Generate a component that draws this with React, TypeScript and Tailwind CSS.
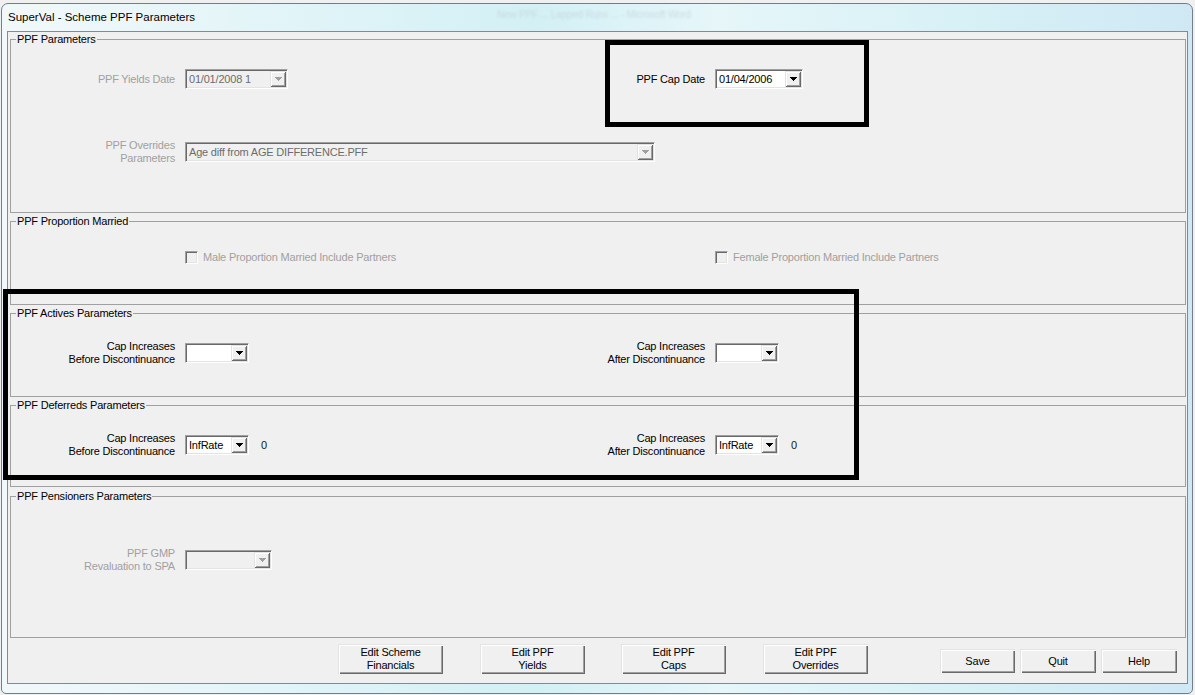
import React from "react";

const ui = "font-['Liberation_Sans',Arial,sans-serif] text-[11px] tracking-[-0.2px]";

function Arrow({ disabled }: { disabled?: boolean }) {
  return (
    <svg width="7" height="4" viewBox="0 0 7 4" shapeRendering="crispEdges">
      <path d="M0 0h7v1h-1v1h-1v1h-1v1h-1v-1h-1v-1h-1v-1h-1z" fill={disabled ? "#a0a0a0" : "#000"} />
    </svg>
  );
}

function Combo({ className, value, disabled }: { className: string; value?: string; disabled?: boolean }) {
  return (
    <div
      className={`flex h-[20px] shrink-0 border border-t-[#a0a0a0] border-l-[#a0a0a0] border-b-white border-r-white p-[1px] shadow-[inset_1px_1px_0_#696969,inset_-1px_-1px_0_#e3e3e3] ${
        disabled ? "bg-[#f0f0f0]" : "bg-white"
      } ${className}`}
    >
      <span
        className={`flex-1 overflow-hidden whitespace-nowrap pl-[2px] leading-[16px] ${
          disabled ? "text-[#6d6d6d]" : "text-black"
        }`}
      >
        {value}
      </span>
      <span className="flex w-[16px] items-center justify-center bg-[#f0f0f0] shadow-[inset_1px_1px_0_#e3e3e3,inset_-1px_-1px_0_#696969,inset_2px_2px_0_#fff,inset_-2px_-2px_0_#a0a0a0]">
        <Arrow disabled={disabled} />
      </span>
    </div>
  );
}

function Check({ label }: { label: string }) {
  return (
    <div className="flex items-center">
      <span className="h-[13px] w-[13px] border border-t-[#a0a0a0] border-l-[#a0a0a0] border-b-white border-r-white bg-[#f0f0f0] shadow-[inset_1px_1px_0_#696969,inset_-1px_-1px_0_#e3e3e3]" />
      <span className="ml-[5px] leading-[13px] text-[#a0a0a0]">{label}</span>
    </div>
  );
}

function Label({ lines, disabled }: { lines: string[]; disabled?: boolean }) {
  return (
    <div className={`w-[164px] shrink-0 text-right leading-[13px] ${disabled ? "text-[#a0a0a0]" : "text-black"}`}>
      {lines.map((l) => (
        <div key={l}>{l}</div>
      ))}
    </div>
  );
}

function Field({
  lines,
  disabled,
  children,
}: {
  lines: string[];
  disabled?: boolean;
  children: React.ReactNode;
}) {
  return (
    <div className="flex items-center">
      <Label lines={lines} disabled={disabled} />
      <div className="ml-[10px] flex items-center">{children}</div>
    </div>
  );
}

function Group({ title, className, children }: { title: string; className: string; children: React.ReactNode }) {
  return (
    <fieldset className={`border border-[#a0a0a0] ${className}`}>
      <legend className="ml-[5px] px-[1px] leading-[13px] text-black">{title}</legend>
      {children}
    </fieldset>
  );
}

function Btn({ className, lines }: { className: string; lines: string[] }) {
  return (
    <div
      className={`flex shrink-0 flex-col items-center justify-center bg-[#f0f0f0] leading-[13px] text-black shadow-[inset_1px_1px_0_#e3e3e3,inset_2px_2px_0_#fff,inset_-1px_-1px_0_#696969,inset_-2px_-2px_0_#a0a0a0] ${className}`}
    >
      {lines.map((l) => (
        <div key={l}>{l}</div>
      ))}
    </div>
  );
}

export default function App() {
  return (
    <div className={`relative h-[695px] w-[1195px] overflow-hidden bg-[#f0f0f0] pb-[1px] pl-[1px] pr-[2px] pt-[3px] ${ui}`}>
      <div className="flex h-full flex-col rounded-t-[7px] rounded-b-[5px] border border-[#6f7f8b] bg-[linear-gradient(90deg,#f2f8fa,#e4f5f8_20%,#d3f0f5_45%,#e6f6f9_60%,#d8f1f6_80%,#cfe8f4)]">
        <div className="relative flex h-[27px] items-center pl-[6px]">
          <span className="font-['Liberation_Sans',Arial,sans-serif] text-[11.5px] tracking-normal text-black">
            SuperVal - Scheme PPF Parameters
          </span>
          <span className="absolute left-[495px] top-[3px] text-[10px] text-[#bccdd3] opacity-60 blur-[0.8px]">
            New PPF ... Lapped Runs ... - Microsoft Word
          </span>
        </div>
        <div className="ml-[5px] mr-[4px] flex h-[653px] flex-col border border-[#7f8c95] bg-[#f0f0f0] pl-[2px] pr-[1px] pt-[1px]">
          <Group title="PPF Parameters" className="h-[180px]">
            <div className="mt-[23px] grid grid-cols-[530px_1fr]">
              <Field lines={["PPF Yields Date"]} disabled>
                <Combo className="w-[103px]" value="01/01/2008 1" disabled />
              </Field>
              <Field lines={["PPF Cap Date"]}>
                <Combo className="w-[88px]" value="01/04/2006" />
              </Field>
            </div>
            <div className="mt-[50px]">
              <Field lines={["PPF Overrides", "Parameters"]} disabled>
                <Combo className="w-[470px]" value="Age diff from AGE DIFFERENCE.PFF" disabled />
              </Field>
            </div>
          </Group>

          <Group title="PPF Proportion Married" className="mt-[2px] h-[90px]">
            <div className="mt-[23px] grid grid-cols-[530px_1fr]">
              <div className="pl-[174px]">
                <Check label="Male Proportion Married Include Partners" />
              </div>
              <div className="pl-[174px]">
                <Check label="Female Proportion Married Include Partners" />
              </div>
            </div>
          </Group>

          <Group title="PPF Actives Parameters" className="mt-[2px] h-[90px]">
            <div className="mt-[20px] grid grid-cols-[530px_1fr]">
              <Field lines={["Cap Increases", "Before Discontinuance"]}>
                <Combo className="w-[64px]" />
              </Field>
              <Field lines={["Cap Increases", "After Discontinuance"]}>
                <Combo className="w-[64px]" />
              </Field>
            </div>
          </Group>

          <Group title="PPF Deferreds Parameters" className="mt-[2px] h-[88px]">
            <div className="mt-[20px] grid grid-cols-[530px_1fr]">
              <Field lines={["Cap Increases", "Before Discontinuance"]}>
                <Combo className="w-[64px]" value="InfRate" />
                <span className="ml-[12px] text-[#1a1a00]">0</span>
              </Field>
              <Field lines={["Cap Increases", "After Discontinuance"]}>
                <Combo className="w-[64px]" value="InfRate" />
                <span className="ml-[12px] text-[#1a1a00]">0</span>
              </Field>
            </div>
          </Group>

          <Group title="PPF Pensioners Parameters" className="mt-[3px] h-[148px]">
            <div className="mt-[44px]">
              <Field lines={["PPF GMP", "Revaluation to SPA"]} disabled>
                <Combo className="w-[87px]" disabled />
              </Field>
            </div>
          </Group>

          <div className="mt-[6px] flex items-start pl-[328px]">
            <Btn className="h-[30px] w-[105px]" lines={["Edit Scheme", "Financials"]} />
            <Btn className="ml-[37px] h-[30px] w-[105px]" lines={["Edit PPF", "Yields"]} />
            <Btn className="ml-[36px] h-[30px] w-[105px]" lines={["Edit PPF", "Caps"]} />
            <Btn className="ml-[37px] h-[30px] w-[105px]" lines={["Edit PPF", "Overrides"]} />
            <Btn className="ml-[72px] mt-[5px] h-[24px] w-[75px]" lines={["Save"]} />
            <Btn className="ml-[5px] mt-[5px] h-[24px] w-[76px]" lines={["Quit"]} />
            <Btn className="ml-[5px] mt-[5px] h-[24px] w-[76px]" lines={["Help"]} />
          </div>
        </div>
      </div>

      {/* annotation boxes drawn over the form */}
      <div className="pointer-events-none absolute left-[605px] top-[40px] h-[87px] w-[264px] border-[5px] border-black" />
      <div className="pointer-events-none absolute left-[3px] top-[289px] h-[191px] w-[856px] border-[5px] border-black" />
    </div>
  );
}
